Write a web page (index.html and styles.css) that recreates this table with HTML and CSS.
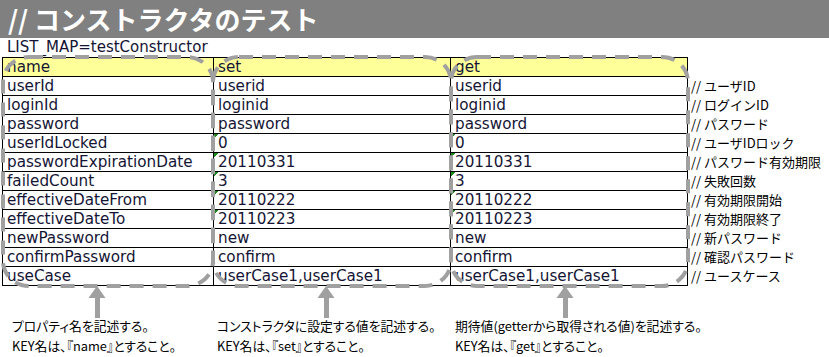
FILE: index.html
```html
<!DOCTYPE html>
<html lang="ja">
<head>
<meta charset="utf-8">
<title>コンストラクタのテスト</title>
<link rel="stylesheet" href="styles.css">
</head>
<body>
<div class="page">
  <h1 class="title">// コンストラクタのテスト</h1>
  <div class="listmap">LIST_MAP=testConstructor</div>
  <table class="grid">
    <colgroup><col class="c1"><col class="c2"><col class="c3"><col class="c4"></colgroup>
    <tr class="head"><td>name</td><td>set</td><td>get</td><td class="cmt"></td></tr>
    <tr><td>userId</td><td>userid</td><td>userid</td><td class="cmt">// ユーザID</td></tr>
    <tr><td>loginId</td><td>loginid</td><td>loginid</td><td class="cmt">// ログインID</td></tr>
    <tr><td>password</td><td>password</td><td>password</td><td class="cmt">// パスワード</td></tr>
    <tr><td>userIdLocked</td><td class="num">0</td><td class="num">0</td><td class="cmt">// ユーザIDロック</td></tr>
    <tr><td>passwordExpirationDate</td><td class="num">20110331</td><td class="num">20110331</td><td class="cmt">// パスワード有効期限</td></tr>
    <tr><td>failedCount</td><td class="num">3</td><td class="num">3</td><td class="cmt">// 失敗回数</td></tr>
    <tr><td>effectiveDateFrom</td><td class="num">20110222</td><td class="num">20110222</td><td class="cmt">// 有効期限開始</td></tr>
    <tr><td>effectiveDateTo</td><td class="num">20110223</td><td class="num">20110223</td><td class="cmt">// 有効期限終了</td></tr>
    <tr><td>newPassword</td><td>new</td><td>new</td><td class="cmt">// 新パスワード</td></tr>
    <tr><td>confirmPassword</td><td>confirm</td><td>confirm</td><td class="cmt">// 確認パスワード</td></tr>
    <tr><td>useCase</td><td>userCase1,userCase1</td><td>userCase1,userCase1</td><td class="cmt">// ユースケース</td></tr>
  </table>
  <div class="notes">
    <div class="note n1">プロパティ名を記述する。<br>KEY名は、『name』とすること。</div>
    <div class="note n2">コンストラクタに設定する値を記述する。<br>KEY名は、『set』とすること。</div>
    <div class="note n3">期待値(getterから取得される値)を記述する。<br>KEY名は、『get』とすること。</div>
  </div>
  <svg class="overlay" width="829" height="357" viewBox="0 0 829 357" aria-hidden="true">
    <g class="dash">
      <rect x="3" y="57" width="210" height="229" rx="26" ry="25"/>
      <rect x="213" y="57" width="238" height="229" rx="26" ry="25"/>
      <rect x="451" y="57" width="237" height="229" rx="26" ry="25"/>
    </g>
    <g class="arrow">
      <polygon points="97,286 88.5,298 105.5,298"/>
      <rect x="95" y="297" width="5" height="21"/>
      <polygon points="326,286 317.5,298 334.5,298"/>
      <rect x="324" y="297" width="5" height="21"/>
      <polygon points="565,286 556.5,298 573.5,298"/>
      <rect x="563" y="297" width="5" height="21"/>
    </g>
  </svg>
</div>
</body>
</html>
```
FILE: styles.css
```css
html, body {
  margin: 0;
  padding: 0;
  background: #fff;
}
.page {
  position: relative;
  width: 829px;
  height: 357px;
  overflow: hidden;
}
.title {
  margin: 0;
  height: 38px;
  line-height: 38px;
  padding-left: 8px;
  background: #808080;
  color: #fff;
  font-family: "Noto Sans CJK JP", sans-serif;
  font-size: 26px;
  font-weight: bold;
  white-space: nowrap;
}
.listmap {
  height: 19px;
  line-height: 19px;
  padding-left: 7px;
  font-family: "DejaVu Sans", sans-serif;
  font-size: 15px;
  color: #141434;
}
.grid {
  border-collapse: collapse;
  table-layout: fixed;
  width: 826px;
  margin-left: 2px;
  font-family: "DejaVu Sans", sans-serif;
  font-size: 15.2px;
  color: #141434;
}
.c1 { width: 211px; }
.c2 { width: 237px; }
.c3 { width: 237px; }
.c4 { width: 141px; }
.grid td {
  border: 1px solid #000;
  height: 18px;
  line-height: 18px;
  padding: 0 0 0 4px;
  white-space: nowrap;
  overflow: hidden;
}
.grid tr.head td {
  background: #ffff99;
}
.grid tr.head td.cmt {
  background: transparent;
}
.grid td.cmt {
  border: none;
  padding-left: 3px;
  font-family: "Noto Sans CJK JP", sans-serif;
  font-size: 13px;
  color: #000;
}
.grid td.num {
  background: linear-gradient(135deg, #1a8a1a 0, #1a8a1a 3px, transparent 3px) no-repeat left top / 6px 6px;
}
.notes {
  display: grid;
  grid-template-columns: 205px 238px 1fr;
  padding-left: 12px;
  margin-top: 30px;
  font-family: "Noto Sans CJK JP", sans-serif;
  font-size: 12.8px;
  font-feature-settings: "palt";
  line-height: 20px;
  color: #000;
  white-space: nowrap;
}
.overlay {
  position: absolute;
  left: 0;
  top: 0;
  pointer-events: none;
}
.dash rect {
  fill: none;
  stroke: #a0a0a0;
  stroke-width: 4;
  stroke-dasharray: 14 9;
}
.arrow polygon, .arrow rect {
  fill: #a0a0a0;
}
```
